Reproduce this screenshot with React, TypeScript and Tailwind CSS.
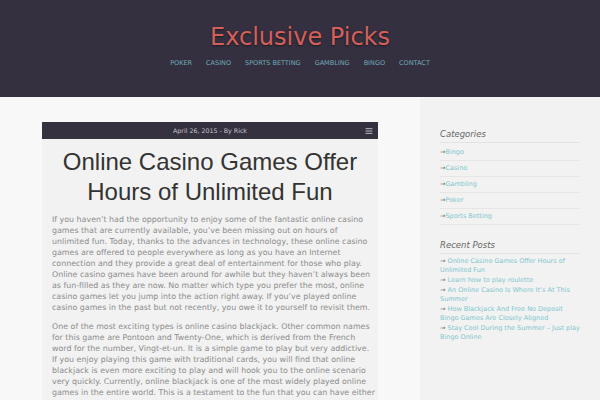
import { AlignJustify } from 'lucide-react';

const NAV = ['Poker', 'Casino', 'Sports Betting', 'Gambling', 'Bingo', 'Contact'];

const CATEGORIES = ['Bingo', 'Casino', 'Gambling', 'Poker', 'Sports Betting'];

const RECENT = [
  'Online Casino Games Offer Hours of Unlimited Fun',
  'Learn how to play roulette',
  'An Online Casino Is Where It’s At This Summer',
  'How Blackjack And Free No Deposit Bingo Games Are Closely Aligned',
  'Stay Cool During the Summer – Just play Bingo Online',
];

const PARAGRAPHS = [
  'If you haven’t had the opportunity to enjoy some of the fantastic online casino games that are currently available, you’ve been missing out on hours of unlimited fun. Today, thanks to the advances in technology, these online casino games are offered to people everywhere as long as you have an Internet connection and they provide a great deal of entertainment for those who play. Online casino games have been around for awhile but they haven’t always been as fun-filled as they are now. No matter which type you prefer the most, online casino games let you jump into the action right away. If you’ve played online casino games in the past but not recently, you owe it to yourself to revisit them.',
  'One of the most exciting types is online casino blackjack. Other common names for this game are Pontoon and Twenty-One, which is derived from the French word for the number, Vingt-et-un. It is a simple game to play but very addictive. If you enjoy playing this game with traditional cards, you will find that online blackjack is even more exciting to play and will hook you to the online scenario very quickly. Currently, online blackjack is one of the most widely played online games in the entire world. This is a testament to the fun that you can have either online or off.',
];

function Header() {
  return (
    <header className="h-[97px] bg-[#34303f] flex flex-col items-center pt-[21px]">
      <h1 className="text-[24px] leading-[32px] text-[#d65f59] [text-shadow:0_1px_2px_rgba(0,0,0,0.5)]">
        Exclusive Picks
      </h1>
      <nav className="flex gap-[14px] mt-[6px] text-[6.5px] uppercase text-[#6fa9b8]">
        {NAV.map((item) => (
          <a key={item}>{item}</a>
        ))}
      </nav>
    </header>
  );
}

function Post() {
  return (
    <article className="w-[336px] bg-[#f2f2f2] mt-[25px]">
      <div className="relative h-[17px] bg-[#35313f] flex items-center justify-center text-[6.3px] text-[#c8c8cc]">
        April 26, 2015 - By Rick
        <AlignJustify className="absolute right-[5px] top-[5px] w-[8px] h-[8px] text-[#bbb]" strokeWidth={3} />
      </div>
      <h2 className="font-['Liberation_Sans',sans-serif] text-[24px] leading-[30px] text-[#333] text-center pt-[8px] px-[8px]">
        Online Casino Games Offer Hours of Unlimited Fun
      </h2>
      <div className="pl-[10px] pr-[3px] pt-[7px] text-[7.9px] leading-[11px] text-[#8c8c8c]">
        {PARAGRAPHS.map((p, i) => (
          <p key={i} className="mb-[8px]">
            {p}
          </p>
        ))}
      </div>
    </article>
  );
}

function Sidebar() {
  return (
    <aside className="w-[180px] bg-[#f2f2f2] px-[20px] pt-[31px]">
      <h3 className="italic text-[8.5px] leading-[12px] text-[#666] pb-[2px] border-b border-[#e3e3e3]">Categories</h3>
      <ul className="text-[6.5px] text-[#7fc6cf] pt-[2px]">
        {CATEGORIES.map((c) => (
          <li key={c} className="h-[16px] flex items-center border-b border-[#e6e6e6]">
            <span className="text-[#666]">→</span>
            {c}
          </li>
        ))}
      </ul>
      <h3 className="italic text-[8.5px] leading-[12px] text-[#666] pb-[2px] mt-[14px] border-b border-[#e3e3e3]">
        Recent Posts
      </h3>
      <ul className="text-[6.5px] leading-[9px] text-[#7fc6cf] pt-[3px]">
        {RECENT.map((r) => (
          <li key={r} className="mb-[1px]">
            <span className="text-[#666]">→ </span>
            {r}
          </li>
        ))}
      </ul>
    </aside>
  );
}

export default function App() {
  return (
    <div className="w-[600px] h-[400px] overflow-hidden bg-[#f8f8f8] font-['DejaVu_Sans',sans-serif]">
      <Header />
      <div className="flex h-[303px]">
        <main className="flex-1 pl-[42px]">
          <Post />
        </main>
        <Sidebar />
      </div>
    </div>
  );
}
